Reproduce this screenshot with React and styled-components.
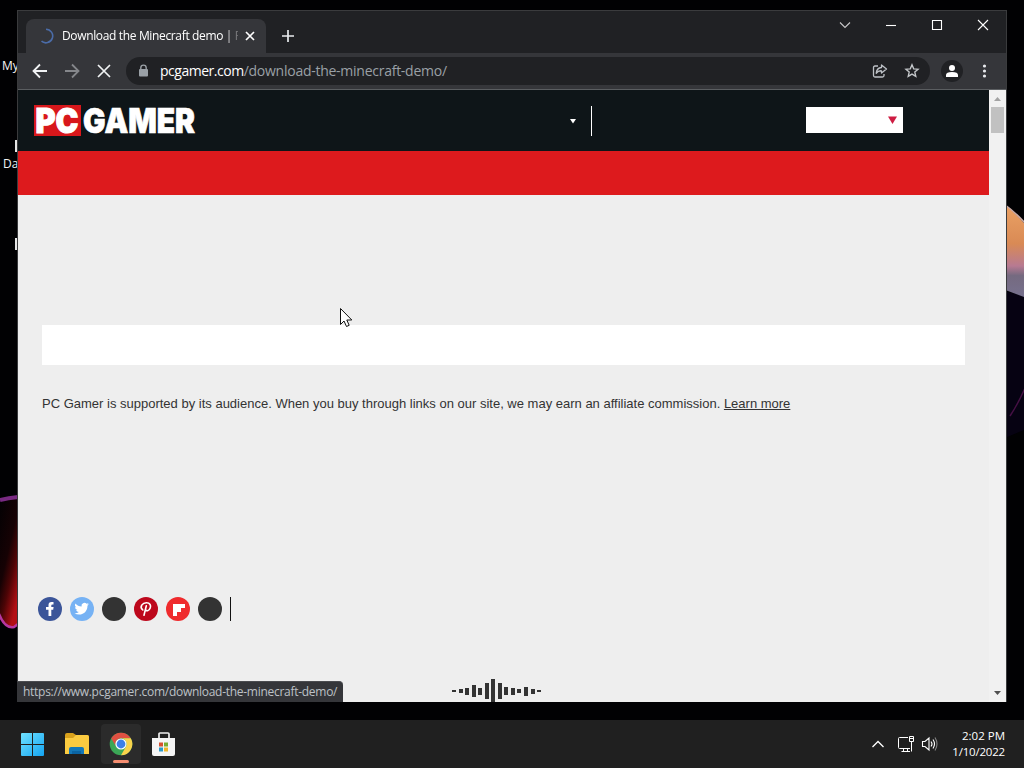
import React from "react";
import styled, { createGlobalStyle } from "styled-components";

const GlobalStyle = createGlobalStyle`
* {
    box-sizing: border-box;
}

body {
    margin: 0;
    overflow: hidden;
    background-color: #010103;
    font-family: "Open Sans", "Noto Sans", sans-serif;
}

svg {
    display: block;
    flex: none;
}
`;

const Screen = styled.div`
    width: 1024px;
    height: 768px;
    display: flex;
    flex-direction: column;
`;

const Desktop = styled.main`
    position: relative;
    flex: 1;
    overflow: hidden;
    background-color: #010103;
`;

const Wallpaper = styled.svg`
    position: absolute;
    inset: 0;
`;

const ShortcutLabel = styled.span`
    position: absolute;
    left: ${(props) => props.$x}px;
    top: ${(props) => props.$y}px;
    color: #f4f4f4;
    font-size: 12px;
    line-height: 16px;
`;

const ShortcutIcon = styled.span`
    position: absolute;
    left: 15px;
    top: ${(props) => props.$y}px;
    width: 8px;
    height: 12px;
    background-color: #e6e6e6;
`;

const BrowserWindow = styled.section`
    position: absolute;
    left: 17px;
    top: 10px;
    width: 990px;
    height: 692px;
    display: flex;
    flex-direction: column;
    border: 1px solid #3a3b3d;
    border-bottom: 0;
    background-color: #202124;
`;

const TabStrip = styled.header`
    height: 42px;
    display: flex;
    align-items: flex-start;
    padding: 8px 0 0 8px;
`;

const Tab = styled.div`
    width: 240px;
    height: 34px;
    display: flex;
    align-items: center;
    padding: 0 8px 0 12px;
    border-radius: 8px 8px 0 0;
    background-color: #35363a;
`;

const TabTitle = styled.span`
    width: 176px;
    margin: 0 4px 0 8px;
    overflow: hidden;
    white-space: nowrap;
    color: #fff;
    font-size: 12px;
    line-height: 18px;
    letter-spacing: -0.35px;
    mask-image: linear-gradient(90deg, #000 163px, transparent 180px);
`;

const NewTab = styled.div`
    margin: 10px 0 0 15px;
`;

const WindowControls = styled.div`
    display: flex;
    margin: -8px 0 0 auto;
`;

const WindowButton = styled.div`
    width: 46px;
    height: 28px;
    display: flex;
    align-items: center;
    justify-content: center;
`;

const Toolbar = styled.div`
    height: 37px;
    display: flex;
    align-items: center;
    padding: 0 14px;
    border-bottom: 1px solid #5b5e61;
    background-color: #35363a;
`;

const NavButtons = styled.div`
    display: flex;
    gap: 16px;
`;

const AddressBar = styled.div`
    width: 804px;
    height: 28px;
    display: flex;
    align-items: center;
    margin-left: 14px;
    padding: 0 10px 0 12px;
    border-radius: 14px;
    background-color: #202124;
`;

const Url = styled.span`
    flex: 1;
    margin-left: 11px;
    color: #9aa0a6;
    font-size: 14px;
    line-height: 20px;
    letter-spacing: -0.26px;

    b {
        color: #fff;
        font-weight: 400;
        letter-spacing: -0.48px;
    }
`;

const AddressActions = styled.div`
    display: flex;
    gap: 16px;
`;

const Avatar = styled.div`
    width: 22px;
    height: 22px;
    margin: 0 13px 0 11px;
    border-radius: 50%;
    background-color: #202124;
`;

const Viewport = styled.div`
    position: relative;
    flex: 1;
    min-height: 0;
    display: flex;
    background-color: #eee;
`;

const Page = styled.article`
    width: 971px;
    display: flex;
    flex-direction: column;
    overflow: hidden;
`;

const SiteHeader = styled.header`
    height: 61px;
    flex: none;
    display: flex;
    align-items: center;
    padding: 0 86px 0 16px;
    background-color: #0e1518;
`;

const LogoArt = styled.svg`
    overflow: visible;
`;

const HeaderArrow = styled.div`
    margin-left: 372px;
`;

const HeaderDivider = styled.div`
    width: 1px;
    height: 30px;
    margin: 1px 0 0 14px;
    background-color: #fff;
`;

const EditionSelect = styled.div`
    width: 97px;
    height: 26px;
    display: flex;
    align-items: center;
    justify-content: flex-end;
    margin: -1px 0 0 auto;
    padding-right: 6px;
    background-color: #fff;
`;

const NavBand = styled.nav`
    height: 44px;
    flex: none;
    background-color: #dd1a1d;
`;

const PageBody = styled.div`
    display: flex;
    flex-direction: column;
    padding: 130px 24px 0;
`;

const Banner = styled.div`
    height: 40px;
    background-color: #fff;
`;

const Affiliate = styled.p`
    margin: 29px 0 0;
    color: #333;
    font-family: "Liberation Sans", Arial, sans-serif;
    font-size: 13px;
    line-height: 20px;

    a {
        color: #333;
        text-decoration: underline;
    }
`;

const SocialList = styled.div`
    display: flex;
    gap: 8px;
    margin: 183px 0 0 -4px;
`;

const SocialButton = styled.span`
    width: 24px;
    height: 24px;
    border-radius: 50%;
    background-color: ${(props) => props.$color};
`;

const SocialDivider = styled.span`
    width: 1px;
    height: 24px;
    background-color: #111;
`;

const Equalizer = styled.div`
    height: 24px;
    display: flex;
    align-items: center;
    gap: 2.55px;
    margin: 58px 0 0 410px;
`;

const EqualizerBar = styled.i`
    flex: none;
    width: 4px;
    height: ${(props) => props.$size}px;
    background-color: #333;
`;

const Scrollbar = styled.div`
    width: 17px;
    display: flex;
    flex-direction: column;
    align-items: center;
    justify-content: space-between;
    background-color: #f1f1f1;
`;

const ScrollThumb = styled.div`
    width: 13px;
    height: 26px;
    margin-bottom: auto;
    background-color: #c1c1c1;
`;

const StatusBubble = styled.div`
    position: absolute;
    left: -1px;
    bottom: 0;
    width: 326px;
    height: 21px;
    padding: 0 0 0 6px;
    border-top: 1px solid #4b4c50;
    border-radius: 0 4px 0 0;
    background-color: #35363a;
    color: #bdc1c6;
    font-size: 12px;
    line-height: 20px;
    letter-spacing: -0.28px;
    white-space: nowrap;
`;

const Pointer = styled.svg`
    position: absolute;
    left: 339px;
    top: 307px;
`;

const Taskbar = styled.footer`
    height: 48px;
    display: flex;
    align-items: center;
    padding: 0 19px 0 13px;
    background-color: #202020;
`;

const TaskButton = styled.div`
    position: relative;
    width: 40px;
    height: 40px;
    display: flex;
    align-items: center;
    justify-content: center;
    margin-right: 4px;
    border-radius: 4px;
    background-color: ${(props) => (props.$active ? "#2b2b2b" : "transparent")};

    &::after {
        content: "";
        display: ${(props) => (props.$active ? "block" : "none")};
        position: absolute;
        bottom: 1px;
        width: 16px;
        height: 3px;
        border-radius: 2px;
        background-color: #f58d70;
    }
`;

const Tray = styled.div`
    display: flex;
    align-items: center;
    margin-left: auto;
`;

const TrayIcon = styled.svg`
    margin-right: ${(props) => props.$gap}px;
`;

const Clock = styled.div`
    width: 59px;
    color: #fff;
    font-size: 11.5px;
    line-height: 16px;
    letter-spacing: -0.2px;
    text-align: right;
    white-space: nowrap;

    span {
        letter-spacing: 0;
    }
`;

const bars = [2, 4, 7, 12, 7, 16, 24, 16, 8, 7, 4, 9, 5, 2];

function WallpaperArt() {
  return (
    <Wallpaper width="1024" height="720" viewBox="0 0 1024 720">
      <defs>
        <linearGradient id="petal" x1="0" y1="0" x2="0" y2="1">
          <stop offset="0" stopColor="#eda566" />
          <stop offset="0.45" stopColor="#d98a55" />
          <stop offset="0.68" stopColor="#b77a92" />
          <stop offset="0.78" stopColor="#756a80" />
          <stop offset="1" stopColor="#77718e" />
        </linearGradient>
        <linearGradient id="ember" x1="0" y1="0" x2="0.6" y2="1">
          <stop offset="0" stopColor="#030103" />
          <stop offset="0.5" stopColor="#160204" />
          <stop offset="0.72" stopColor="#4d0506" />
          <stop offset="1" stopColor="#b30f14" />
        </linearGradient>
      </defs>
      <path d="M1000 290 1024 296V430L1000 440Z" fill="#060212" />
      <path d="M1000 200Q1014 211 1024 223V297L1000 288Z" fill="url(#petal)" />
      <path d="M1004 204Q1015 212 1025 223" fill="none" stroke="#c6a8a5" strokeWidth="1.5" />
      <path d="M1010 416Q1018 404 1025 388" fill="none" stroke="#451044" strokeWidth="1.5" />
      <path d="M0 502 18 498V625Q10 633 0 616Z" fill="url(#ember)" />
      <path d="M0 500Q8 498 18 497" fill="none" stroke="#792a82" strokeWidth="4" />
      <path d="M-1 614Q5 629 14 627L18 624" fill="none" stroke="#b637a0" strokeWidth="2.5" />
    </Wallpaper>
  );
}

function Logo() {
  return (
    <LogoArt
      width="163"
      height="32"
      fontFamily="Inter, sans-serif"
      fontWeight="900"
      fontSize="34"
      fill="#fff"
      stroke="#fff"
      strokeWidth="0.7"
    >
      <path d="M0 0H47V31H0Z" fill="#d8171b" stroke="none" />
      <text x="1.5" y="28" textLength="43" lengthAdjust="spacingAndGlyphs" strokeWidth="1.1">PC</text>
      <text x="49" y="28" textLength="112" lengthAdjust="spacingAndGlyphs">GAMER</text>
    </LogoArt>
  );
}

function WindowIcons() {
  const line = { fill: "none", stroke: "#fff", strokeWidth: 1.1 };
  return (
    <WindowControls>
      <WindowButton>
        <svg width="12" height="12" {...line} stroke="#c9c9ca"><path d="M1 3.5 6 8.5 11 3.5" /></svg>
      </WindowButton>
      <WindowButton>
        <svg width="12" height="12" {...line}><path d="M1 6.5H11" /></svg>
      </WindowButton>
      <WindowButton>
        <svg width="12" height="12" {...line}><path d="M1.5 1.5H10.5V10.5H1.5Z" /></svg>
      </WindowButton>
      <WindowButton>
        <svg width="12" height="12" {...line}><path d="M1 1 11 11M11 1 1 11" /></svg>
      </WindowButton>
    </WindowControls>
  );
}

function BrowserToolbar() {
  return (
    <Toolbar>
      <NavButtons>
        <svg width="16" height="16" fill="none" stroke="#f1f3f4" strokeWidth="1.8"><path d="M15 8H2M8 1.5 1.5 8 8 14.5" /></svg>
        <svg width="16" height="16" fill="none" stroke="#85878b" strokeWidth="1.8"><path d="M1 8H14M8 1.5 14.5 8 8 14.5" /></svg>
        <svg width="16" height="16" fill="none" stroke="#f1f3f4" strokeWidth="1.7"><path d="M2 2 14 14M14 2 2 14" /></svg>
      </NavButtons>
      <AddressBar>
        <svg width="11" height="14" viewBox="0 0 11 14">
          <path d="M2.8 6V3.8a2.7 2.7 0 0 1 5.4 0V6" fill="none" stroke="#9aa0a6" strokeWidth="1.4" />
          <rect x="1" y="5" width="9" height="7.5" rx="1" fill="#9aa0a6" />
        </svg>
        <Url><b>pcgamer.com</b>/download-the-minecraft-demo/</Url>
        <AddressActions>
          <svg width="16" height="16" fill="none" stroke="#bdc1c6" strokeWidth="1.3" strokeLinejoin="round">
            <path d="M6 3H3Q1.5 3 1.5 4.5V12.5Q1.5 14 3 14H10.5Q12 14 12 12.5V11" />
            <path d="M9.5 2 14.5 6 9.5 10V7.8Q6.2 7.5 4.2 10.3 4.7 5 9.5 4.5Z" />
          </svg>
          <svg width="16" height="16" fill="none" stroke="#c5c8cb" strokeWidth="1.35">
            <path d="m8 1.8 1.7 4 4.4.4-3.3 2.9 1 4.3L8 11.1l-3.8 2.3 1-4.3L1.9 6.2l4.4-.4Z" />
          </svg>
        </AddressActions>
      </AddressBar>
      <Avatar>
        <svg width="22" height="22" fill="#fff"><circle cx="11" cy="8" r="3" /><path d="M5 17V15Q5 12 11 12T17 15V17Z" /></svg>
      </Avatar>
      <svg width="16" height="16" fill="#e8eaed"><circle cx="8.5" cy="3" r="1.6" /><circle cx="8.5" cy="8" r="1.6" /><circle cx="8.5" cy="13" r="1.6" /></svg>
    </Toolbar>
  );
}

function SocialButtons() {
  return (
    <SocialList>
      <SocialButton $color="#3b5599">
        <svg width="24" height="24" fill="#fff"><path d="M10.5 19V12.8H8V10H10.5V8Q10.5 5 13.5 5H15.5V7.5H14.3Q13.3 7.5 13.3 8.5V10H15.6L15.2 12.8H13.3V19Z" /></svg>
      </SocialButton>
      <SocialButton $color="#76b2f4">
        <svg width="24" height="24" viewBox="0 0 24 24" fill="#fff">
          <path transform="translate(4.5 4.5) scale(.6)" d="M23.95 4.57a10 10 0 0 1-2.82.77 4.96 4.96 0 0 0 2.16-2.72c-.95.56-2 .97-3.13 1.18a4.92 4.92 0 0 0-8.38 4.48C7.69 8.09 4.07 6.13 1.64 3.16a4.92 4.92 0 0 0 1.52 6.57 4.9 4.9 0 0 1-2.23-.61v.06a4.92 4.92 0 0 0 3.95 4.83 5 5 0 0 1-2.21.08 4.94 4.94 0 0 0 4.6 3.42A9.87 9.87 0 0 1 0 19.54a13.99 13.99 0 0 0 7.56 2.21c9.05 0 14-7.5 14-13.98 0-.21 0-.42-.02-.63a9.94 9.94 0 0 0 2.46-2.55z" />
        </svg>
      </SocialButton>
      <SocialButton $color="#333" />
      <SocialButton $color="#bd081c">
        <svg width="24" height="24" fill="none" stroke="#fff" strokeWidth="1.6" strokeLinecap="round"><path d="M12.3 8.8 10 18.2M8.8 13C4.9 9.5 8.7 5.8 12.4 5.8 16.1 5.8 17.2 8.5 16.2 11.1 15.1 14.2 12.2 14.4 11.4 12.5" /></svg>
      </SocialButton>
      <SocialButton $color="#ef2b2d">
        <svg width="24" height="24" fill="#fff"><path d="M7 7H19V11H15V15H11V19H7Z" /></svg>
      </SocialButton>
      <SocialButton $color="#333" />
      <SocialDivider />
    </SocialList>
  );
}

function FolderIcon() {
  return (
    <svg width="26" height="24" viewBox="0 0 26 24">
      <path d="M1 3Q1 1 3 1H9L12 3H23Q25 3 25 5V21H1Z" fill="#d9a11c" />
      <path d="M1 6H9L12 3H23Q25 3 25 5V22H1Z" fill="#fbcb40" />
      <path d="M5 22V17Q5 15 7 15H18Q20 15 20 17V22Z" fill="#1478b8" />
      <path d="M8 19H17V22H8Z" fill="#0b64a3" />
    </svg>
  );
}

function ChromeIcon() {
  return (
    <svg width="24" height="24" viewBox="0 0 24 24">
      <circle cx="12" cy="12" r="11.3" fill="#3ba756" />
      <path d="M2.21 6.35A11.3 11.3 0 0 1 21.79 6.35H12A5.65 5.65 0 0 0 7.11 14.82Z" fill="#df5042" />
      <path d="M21.79 6.35A11.3 11.3 0 0 1 12 23.3L16.89 14.82A5.65 5.65 0 0 0 12 6.35Z" fill="#f9d34b" />
      <circle cx="12" cy="12" r="5.6" fill="#fff" />
      <circle cx="12" cy="12" r="4.4" fill="#3c80e8" />
    </svg>
  );
}

function StoreIcon() {
  return (
    <svg width="26" height="26" viewBox="1 0 26 26">
      <path d="M7 8V3Q7 2 8 2H16Q17 2 17 3V8" fill="none" stroke="#eee" strokeWidth="1.7" transform="translate(1 0)" />
      <path d="M1 7H24V23Q24 25 22 25H3Q1 25 1 23Z" fill="#f5f5f5" />
      <path d="M8 11.5H12V15.5H8Z" fill="#d65130" />
      <path d="M13 11.5H17V15.5H13Z" fill="#78ad32" />
      <path d="M8 16.5H12V20.5H8Z" fill="#2b9ac9" />
      <path d="M13 16.5H17V20.5H13Z" fill="#f0b72b" />
    </svg>
  );
}

export default function App() {
  return (
    <Screen>
      <GlobalStyle />
      <Desktop>
        <WallpaperArt />
        <ShortcutLabel $x={2} $y={58}>My</ShortcutLabel>
        <ShortcutLabel $x={3} $y={156}>Da</ShortcutLabel>
        <ShortcutIcon $y={140} />
        <ShortcutIcon $y={238} />

        <BrowserWindow>
          <TabStrip>
            <Tab>
              <svg width="16" height="16" fill="none" stroke="#4b6ca8" strokeWidth="1.6"><path d="M8 1.2A6.8 6.8 0 1 1 3.5 13.2" /></svg>
              <TabTitle>Download the Minecraft demo | PC Gamer</TabTitle>
              <svg width="16" height="16" fill="none" stroke="#fff" strokeWidth="1.7"><path d="M4 4 12 12M12 4 4 12" /></svg>
            </Tab>
            <NewTab>
              <svg width="14" height="14" fill="none" stroke="#e8eaed" strokeWidth="1.7"><path d="M7 1V13M1 7H13" /></svg>
            </NewTab>
            <WindowIcons />
          </TabStrip>
          <BrowserToolbar />
          <Viewport>
            <Page>
              <SiteHeader>
                <Logo />
                <HeaderArrow>
                  <svg width="8" height="6" fill="#fff"><path d="M1 1H7L4 5.5Z" /></svg>
                </HeaderArrow>
                <HeaderDivider />
                <EditionSelect>
                  <svg width="9" height="9" fill="#ce1c42"><path d="M0 .5H9L4.5 8Z" /></svg>
                </EditionSelect>
              </SiteHeader>
              <NavBand />
              <PageBody>
                <Banner />
                <Affiliate>
                  PC Gamer is supported by its audience. When you buy through links on our site, we may earn an affiliate commission. <a>Learn more</a>
                </Affiliate>
                <SocialButtons />
                <Equalizer>
                  {bars.map((size, index) => (
                    <EqualizerBar key={index} $size={size} />
                  ))}
                </Equalizer>
              </PageBody>
            </Page>
            <Scrollbar>
              <svg width="17" height="17" fill="#a3a3a3"><path d="M5 11 8.5 7 12 11Z" /></svg>
              <ScrollThumb />
              <svg width="17" height="17" fill="#505050"><path d="M5 6 8.5 10 12 6Z" /></svg>
            </Scrollbar>
            <StatusBubble>https://www.pcgamer.com/download-the-minecraft-demo/</StatusBubble>
          </Viewport>
        </BrowserWindow>
        <Pointer width="16" height="22">
          <path d="M1.5 1.5V17.5L5 14L7.5 19.5L10.2 18.3L7.8 13H12.8Z" fill="#fff" stroke="#111" />
        </Pointer>
      </Desktop>

      <Taskbar>
        <TaskButton>
          <svg width="24" height="24">
            <defs>
              <linearGradient id="start" x1="0" y1="0" x2="1" y2="1">
                <stop stopColor="#70e2ff" />
                <stop offset="1" stopColor="#14a4f2" />
              </linearGradient>
            </defs>
            <path d="M0 2Q0 1 1 1H11V12H0ZM12 1H22Q23 1 23 2V12H12ZM0 13H11V24H1Q0 24 0 23ZM12 13H23V23Q23 24 22 24H12Z" fill="url(#start)" />
          </svg>
        </TaskButton>
        <TaskButton><FolderIcon /></TaskButton>
        <TaskButton $active><ChromeIcon /></TaskButton>
        <TaskButton><StoreIcon /></TaskButton>
        <Tray>
          <TrayIcon $gap={12} width="14" height="14" fill="none" stroke="#fff" strokeWidth="1.3"><path d="M1.5 10 7 4.5 12.5 10" /></TrayIcon>
          <TrayIcon $gap={4} width="20" height="18" fill="none" stroke="#fff" strokeWidth="1">
            <path d="M11 2.5H2.5Q1.5 2.5 1.5 3.5V12.5Q1.5 13.5 2.5 13.5H13M4.5 16.5H13M6.5 13.5V16.5M10.5 13.5V16.5M14.5 6.5V16.5M12.5 1.5H16.5V6.5H12.5ZM12.5 3.5H16.5" />
          </TrayIcon>
          <TrayIcon $gap={7} width="18" height="16" fill="none" stroke="#fff" strokeWidth="1.1">
            <path d="M1.5 5.5H4L8 2V14L4 10.5H1.5ZM10 5.5Q12 8 10 10.5M12 3.5Q15 8 12 12.5" />
            <path d="M14 1.5Q18 8 14 14.5" stroke="#858585" />
          </TrayIcon>
          <Clock><span>2:02 PM</span><br />1/10/2022</Clock>
        </Tray>
      </Taskbar>
    </Screen>
  );
}
